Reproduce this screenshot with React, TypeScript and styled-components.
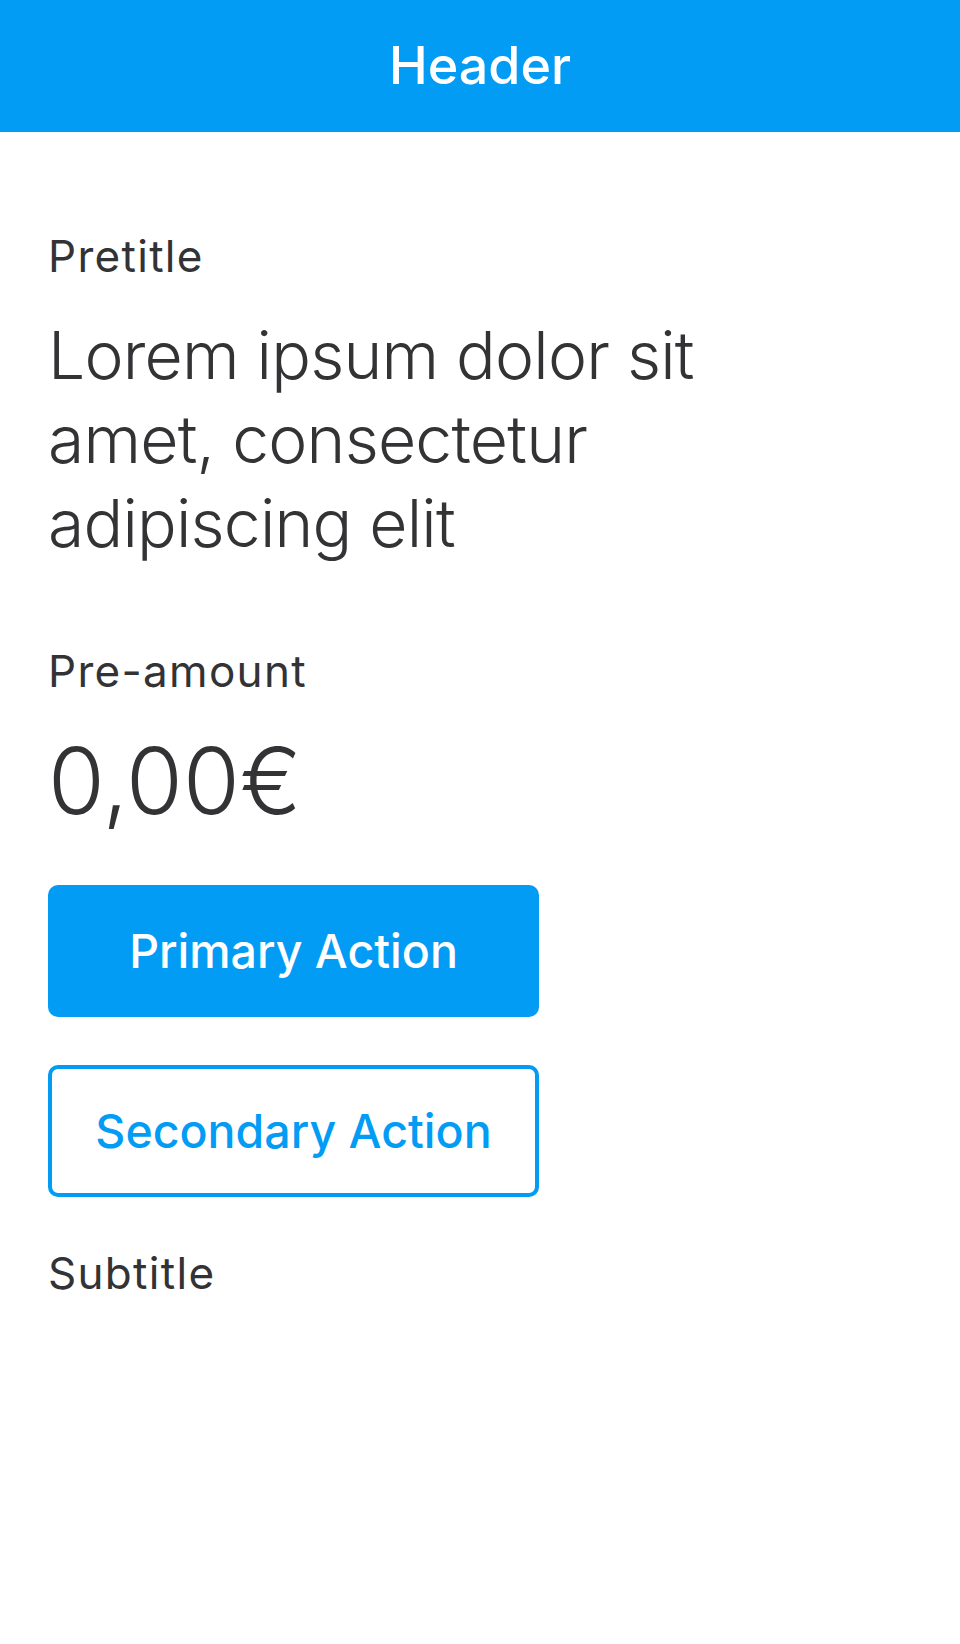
import React from "react";
import styled, { createGlobalStyle } from "styled-components";

const GlobalStyle = createGlobalStyle`
  html, body {
    margin: 0;
    padding: 0;
    background: #ffffff;
  }
  body {
    font-family: Inter, "Noto Sans", "Liberation Sans", sans-serif;
    color: #333336;
  }
  * { box-sizing: border-box; }
`;

const Page = styled.div`
  width: 960px;
  min-height: 1644px;
  background: #ffffff;
  display: flex;
  flex-direction: column;
`;

const HeaderBar = styled.header`
  height: 132px;
  background: #039cf4;
  display: flex;
  align-items: center;
  justify-content: center;
`;

const HeaderTitle = styled.h1`
  margin: 0;
  font-size: 52px;
  font-weight: 500;
  line-height: 1.2;
  color: #ffffff;
`;

const Content = styled.main`
  display: flex;
  flex-direction: column;
  align-items: flex-start;
  padding: 98px 48px 0 48px;
`;

const Label = styled.p<{ $gap?: number }>`
  margin: ${(p) => p.$gap ?? 0}px 0 0 0;
  font-size: 44px;
  font-weight: 400;
  line-height: 1.2;
  letter-spacing: 1.3px;
  color: #333336;
`;

const Title = styled.h2`
  margin: 30px 0 0 0;
  max-width: 680px;
  font-size: 66px;
  font-weight: 300;
  line-height: 84px;
  letter-spacing: -0.8px;
  color: #333336;
`;

const Amount = styled.p`
  margin: 28px 0 0 0;
  font-size: 92px;
  font-weight: 300;
  line-height: 1.2;
  color: #333336;
`;

const ButtonBase = styled.button<{ $gap: number }>`
  margin: ${(p) => p.$gap}px 0 0 0;
  width: 491px;
  height: 132px;
  border-radius: 10px;
  font-family: Inter, "Noto Sans", "Liberation Sans", sans-serif;
  font-size: 46.5px;
  font-weight: 500;
  display: flex;
  align-items: center;
  justify-content: center;
  cursor: pointer;
`;

const PrimaryButton = styled(ButtonBase)`
  background: #039cf4;
  color: #ffffff;
  border: none;
`;

const SecondaryButton = styled(ButtonBase)`
  background: #ffffff;
  color: #039cf4;
  border: 4px solid #039cf4;
`;

export default function App() {
  return (
    <>
      <GlobalStyle />
      <Page>
        <HeaderBar>
          <HeaderTitle>Header</HeaderTitle>
        </HeaderBar>
        <Content>
          <Label>Pretitle</Label>
          <Title>Lorem ipsum dolor sit amet, consectetur adipiscing elit</Title>
          <Label $gap={80}>Pre-amount</Label>
          <Amount>0,00€</Amount>
          <PrimaryButton $gap={49}>Primary Action</PrimaryButton>
          <SecondaryButton $gap={48}>Secondary Action</SecondaryButton>
          <Label $gap={50}>Subtitle</Label>
        </Content>
      </Page>
    </>
  );
}
